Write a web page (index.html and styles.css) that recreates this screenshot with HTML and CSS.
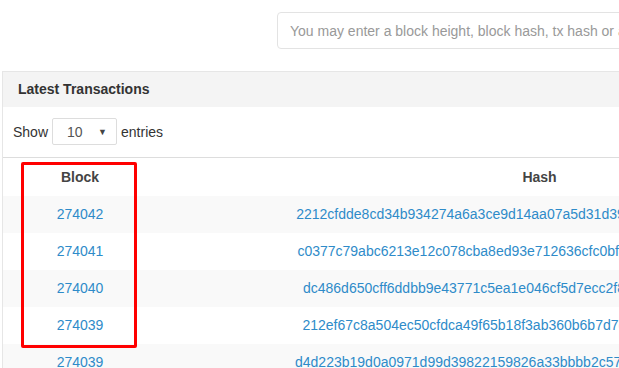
FILE: index.html
```html
<!DOCTYPE html>
<html lang="en">
<head>
  <meta charset="UTF-8" />
  <title>Latest Transactions</title>
  <link rel="stylesheet" href="styles.css">
</head>
<body>

  <div class="search-bar">
    <input class="search-input" type="text" placeholder="You may enter a block height, block hash, tx hash or address" />
  </div>

  <section class="panel">
    <div class="panel-heading">Latest Transactions</div>

    <div class="length-row">
      <span>Show</span>
      <div class="length-select">
        <span>10</span>
        <span class="caret">&#9660;</span>
      </div>
      <span>entries</span>
    </div>

    <div class="table-wrap">
      <table class="tx-table">
        <colgroup>
          <col class="col-block">
          <col class="col-hash">
        </colgroup>
        <thead>
          <tr>
            <th>Block</th>
            <th>Hash</th>
          </tr>
        </thead>
        <tbody>
          <tr>
            <td><a href="#">274042</a></td>
            <td><a href="#">2212cfdde8cd34b934274a6a3ce9d14aa07a5d31d39f1b6e0c4a27d85e13b7c0</a></td>
          </tr>
          <tr>
            <td><a href="#">274041</a></td>
            <td><a href="#">c0377c79abc6213e12c078cba8ed93e712636cfc0bf4e91d2a7c6b0385ed19a4</a></td>
          </tr>
          <tr>
            <td><a href="#">274040</a></td>
            <td><a href="#">dc486d650cff6ddbb9e43771c5ea1e046cf5d7ecc2f8a10b7e93d5c26f04e1ab</a></td>
          </tr>
          <tr>
            <td><a href="#">274039</a></td>
            <td><a href="#">212ef67c8a504ec50cfdca49f65b18f3ab360b6b7d7e0c94a1b5f3d28670ba4c</a></td>
          </tr>
          <tr>
            <td><a href="#">274039</a></td>
            <td><a href="#">d4d223b19d0a0971d99d39822159826a33bbbb2c57e018fa46d3c92b50e7f1d6</a></td>
          </tr>
        </tbody>
      </table>

      <!-- annotation box drawn over the Block column -->
      <div class="highlight"></div>
    </div>
  </section>

</body>
</html>
```

FILE: styles.css
```css
* {
  box-sizing: border-box;
  margin: 0;
  padding: 0;
}

body {
  font-family: "Liberation Sans", Arial, Helvetica, sans-serif;
  font-size: 14px;
  color: #333;
  background: #fff;
  overflow: hidden;
  width: 619px;
  height: 368px;
}

.search-bar {
  padding: 12px 0 0 277px;
  height: 71px;
}

.search-input {
  display: block;
  width: 420px;
  height: 37px;
  padding: 0 12px;
  border: 1px solid #e3e3e3;
  border-radius: 4px;
  font-family: inherit;
  font-size: 14px;
  color: #555;
  outline: none;
}

.search-input::placeholder {
  color: #999;
}

.panel {
  margin-left: 2px;
  width: 920px;
  border: 1px solid #e6e6e6;
  border-right: none;
}

.panel-heading {
  background: #f4f4f4;
  height: 35px;
  line-height: 35px;
  padding-left: 15px;
  font-weight: bold;
  font-size: 14px;
  color: #333;
}

.length-row {
  display: flex;
  align-items: center;
  gap: 4px;
  padding: 11px 10px 12px;
}

.length-select {
  display: flex;
  align-items: center;
  justify-content: space-between;
  width: 65px;
  height: 27px;
  padding: 0 9px 0 14px;
  border: 1px solid #ddd;
  border-radius: 2px;
  color: #555;
}

.caret {
  font-size: 9px;
  color: #444;
}

.table-wrap {
  position: relative;
}

.tx-table {
  width: 100%;
  border-collapse: collapse;
  table-layout: fixed;
  border-top: 1px solid #ddd;
}

.col-block {
  width: 154px;
}

.col-hash {
  width: 765px;
}

.tx-table th {
  height: 38px;
  font-weight: bold;
  text-align: center;
  color: #444;
  vertical-align: middle;
}

.tx-table td {
  height: 37px;
  text-align: center;
  white-space: nowrap;
  vertical-align: middle;
}

.tx-table tbody tr:nth-child(odd) {
  background: #f9f9f9;
}

.tx-table a {
  color: #2e8bc9;
  text-decoration: none;
}

.highlight {
  position: absolute;
  left: 18px;
  top: 5px;
  width: 116px;
  height: 186px;
  border: 3px solid #ff0000;
  border-radius: 2px;
}
```
